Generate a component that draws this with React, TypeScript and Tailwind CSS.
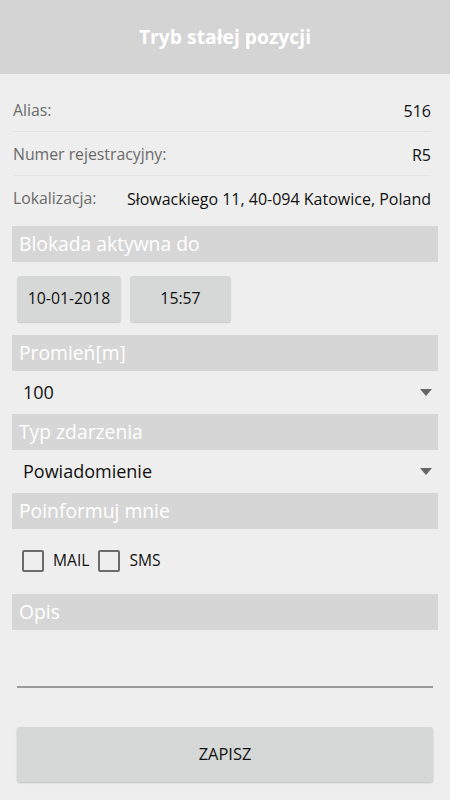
import React from "react";

const font = { fontFamily: '"Open Sans", "Noto Sans", sans-serif' };

function InfoRow({ label, value, last }: { label: string; value: string; last?: boolean }) {
  return (
    <div className={`flex h-[44px] items-center justify-between pt-[2px] ${last ? "" : "border-b border-[#e3e3e3]"}`}>
      <span className="text-[15.8px] text-[#6a6a6a]">{label}</span>
      <span className="text-[16px] text-[#111]">{value}</span>
    </div>
  );
}

function SectionBar({ title }: { title: string }) {
  return (
    <div className="mx-[12px] flex h-[36px] items-center bg-[#d6d6d6] pl-[7px]">
      <span className="text-[19.3px] leading-none text-white">{title}</span>
    </div>
  );
}

function SelectRow({ value }: { value: string }) {
  return (
    <div className="mx-[12px] flex h-[43px] items-center justify-between pl-[11px] pr-[6px]">
      <span className="text-[18px] text-[#111]">{value}</span>
      <svg width="12" height="7" viewBox="0 0 12 7">
        <path d="M0 0 H12 L6 7 Z" fill="#666" />
      </svg>
    </div>
  );
}

function Check({ label }: { label: string }) {
  return (
    <label className="flex items-center gap-[9px]">
      <span className="h-[22px] w-[22px] rounded-[2px] border-2 border-[#6b6b6b]" />
      <span className="text-[15.6px] text-[#111]">{label}</span>
    </label>
  );
}

export default function App() {
  return (
    <div className="min-h-[800px] w-[450px] bg-[#eeeeee]" style={font}>
      <header className="flex h-[74px] items-center justify-center bg-[#d4d4d4]">
        <h1 className="text-[19.3px] font-bold text-white">Tryb stałej pozycji</h1>
      </header>

      <div className="pl-[13px] pr-[19px] pt-[14px]">
        <InfoRow label="Alias:" value="516" />
        <InfoRow label="Numer rejestracyjny:" value="R5" />
        <InfoRow label="Lokalizacja:" value="Słowackiego 11, 40-094 Katowice, Poland" last />
      </div>

      <div className="mt-[6px]">
        <SectionBar title="Blokada aktywna do" />
      </div>
      <div className="ml-[17px] mt-[14px] flex gap-[9px]">
        <button className="h-[46px] w-[104px] rounded-[3px] bg-[#d6d7d7] text-[15.8px] text-[#111] shadow-[0_1px_1px_rgba(0,0,0,0.15)]">
          10-01-2018
        </button>
        <button className="h-[46px] w-[101px] rounded-[3px] bg-[#d6d7d7] text-[15.8px] text-[#111] shadow-[0_1px_1px_rgba(0,0,0,0.15)]">
          15:57
        </button>
      </div>

      <div className="mt-[13px]">
        <SectionBar title="Promień[m]" />
      </div>
      <SelectRow value="100" />
      <SectionBar title="Typ zdarzenia" />
      <SelectRow value="Powiadomienie" />
      <SectionBar title="Poinformuj mnie" />

      <div className="flex h-[65px] items-center gap-[9px] pb-[1px] pl-[22px]">
        <Check label="MAIL" />
        <Check label="SMS" />
      </div>

      <SectionBar title="Opis" />
      <div className="mx-[17px] mt-[56px] h-[2px] bg-[#9a9a9a]" />

      <div className="px-[17px] pt-[39px]">
        <button className="h-[55px] w-full rounded-[3px] bg-[#d6d7d7] text-[16.4px] text-[#111] shadow-[0_1px_2px_rgba(0,0,0,0.2)]">
          ZAPISZ
        </button>
      </div>
    </div>
  );
}
